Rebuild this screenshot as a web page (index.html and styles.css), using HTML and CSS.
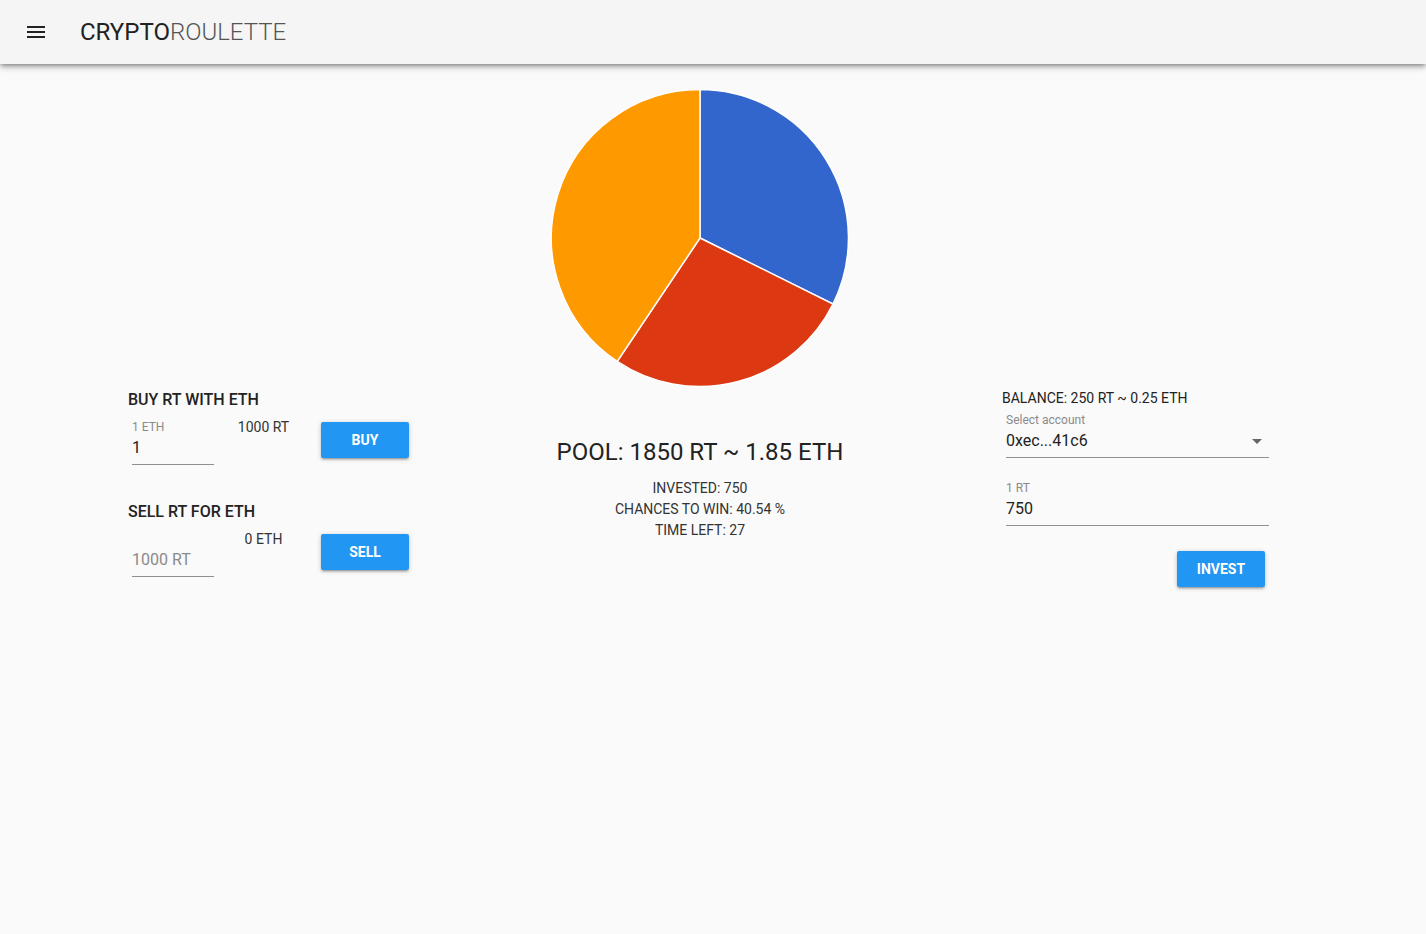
FILE: index.html
```html
<!DOCTYPE html>
<html>
<head>
<meta charset="utf-8">
<title>CryptoRoulette</title>
<link rel="stylesheet" href="styles.css">
</head>
<body>
<header class="appbar">
  <button class="menu-btn" aria-label="menu">
    <svg width="18" height="12" viewBox="0 0 18 12"><rect x="0" y="0" width="18" height="2" fill="#222"/><rect x="0" y="5" width="18" height="2" fill="#222"/><rect x="0" y="10" width="18" height="2" fill="#222"/></svg>
  </button>
  <h1 class="brand"><span class="brand-strong">CRYPTO</span><span class="brand-light">ROULETTE</span></h1>
</header>

<main class="page">
  <div class="chart">
    <svg width="300" height="300" viewBox="0 0 300 300">
      <path d="M150 150 L150 1.5 A148.5 148.5 0 0 1 283 216 Z" fill="#3366cc" stroke="#ffffff" stroke-width="1.5"/>
      <path d="M150 150 L283 216 A148.5 148.5 0 0 1 67.2 273.4 Z" fill="#dc3912" stroke="#ffffff" stroke-width="1.5"/>
      <path d="M150 150 L67.2 273.4 A148.5 148.5 0 0 1 150 1.5 Z" fill="#ff9900" stroke="#ffffff" stroke-width="1.5"/>
    </svg>
  </div>

  <div class="row">
    <section class="col-left">
      <div class="trade">
        <h2 class="trade-title">BUY RT WITH ETH</h2>
        <div class="trade-row">
          <div class="field small">
            <div class="field-label">1 ETH</div>
            <div class="field-input">1</div>
          </div>
          <div class="conv">1000 RT</div>
          <button class="btn">BUY</button>
        </div>
      </div>
      <div class="trade sell">
        <h2 class="trade-title">SELL RT FOR ETH</h2>
        <div class="trade-row">
          <div class="field small">
            <div class="field-label">&nbsp;</div>
            <div class="field-input placeholder">1000 RT</div>
          </div>
          <div class="conv">0 ETH</div>
          <button class="btn">SELL</button>
        </div>
      </div>
    </section>

    <section class="col-center">
      <div class="pool">POOL: 1850 RT ~ 1.85 ETH</div>
      <div class="stats">
        <div>INVESTED: 750</div>
        <div>CHANCES TO WIN: 40.54 %</div>
        <div>TIME LEFT: 27</div>
      </div>
    </section>

    <section class="col-right">
      <div class="balance">BALANCE: 250 RT ~ 0.25 ETH</div>
      <div class="field wide select">
        <div class="field-label">Select account</div>
        <div class="field-input select-input">0xec...41c6<span class="caret"></span></div>
      </div>
      <div class="field wide invest-field">
        <div class="field-label">1 RT</div>
        <div class="field-input">750</div>
      </div>
      <div class="invest-row">
        <button class="btn">INVEST</button>
      </div>
    </section>
  </div>
</main>
</body>
</html>
```

FILE: styles.css
```css
* { box-sizing: border-box; }

html, body {
  margin: 0;
  padding: 0;
}

body {
  background: #fafafa;
  font-family: Roboto, "Liberation Sans", Arial, sans-serif;
  color: #222;
  min-height: 934px;
}

.appbar {
  height: 64px;
  background: #f5f5f5;
  display: flex;
  align-items: center;
  box-shadow: 0 2px 4px -1px rgba(0,0,0,0.35), 0 4px 5px 0 rgba(0,0,0,0.14), 0 1px 10px 0 rgba(0,0,0,0.12);
  position: relative;
  z-index: 2;
}

.menu-btn {
  border: 0;
  background: transparent;
  padding: 0;
  margin: 0 0 0 27px;
  width: 18px;
  height: 12px;
  display: flex;
}

.brand {
  margin: 0 0 0 35px;
  font-size: 24px;
  font-weight: 400;
  letter-spacing: 0;
  line-height: 28px;
}

.brand-strong { color: #222; font-weight: 400; }
.brand-light { color: #555; font-weight: 300; }

.chart {
  display: flex;
  justify-content: center;
  padding-top: 24px;
  padding-right: 26px;
}

.chart svg { display: block; }

.row {
  display: flex;
  padding-left: 128px;
}

.col-left { width: 372px; }
.col-center { width: 400px; text-align: center; padding-top: 50px; }
.col-right { width: 373px; padding-left: 102px; }

.trade-title {
  margin: 0;
  padding-top: 1px;
  font-size: 16px;
  font-weight: 500;
  line-height: 22px;
  color: #222;
}

.trade.sell { margin-top: 35px; }

.trade-row {
  display: flex;
  align-items: flex-start;
}

.field.small {
  margin-left: 4px;
  width: 82px;
}

.field-label {
  margin-top: 9px;
  font-size: 12px;
  line-height: 14px;
  color: #8a8a8a;
}

.field-input {
  margin-top: 4px;
  height: 27px;
  font-size: 16px;
  line-height: 20px;
  color: #222;
  border-bottom: 1px solid #8f8f8f;
}

.field-input.placeholder { color: #8a8a8a; }

.conv {
  width: 99px;
  text-align: center;
  font-size: 14px;
  line-height: 16px;
  margin-top: 8px;
  color: #333;
}

.btn {
  margin-left: 8px;
  margin-top: 11px;
  width: 88px;
  height: 36px;
  border: 0;
  border-radius: 2px;
  background: #2196f3;
  color: #fff;
  font-family: Roboto, "Liberation Sans", Arial, sans-serif;
  font-size: 14px;
  font-weight: 700;
  letter-spacing: 0;
  box-shadow: 0 1px 5px rgba(0,0,0,0.2), 0 2px 2px rgba(0,0,0,0.14), 0 3px 1px -2px rgba(0,0,0,0.12);
  padding: 0;
}

.pool {
  font-size: 24px;
  line-height: 28px;
  color: #222;
}

.stats {
  margin-top: 12px;
  font-size: 14px;
  line-height: 21px;
  color: #333;
}

.balance {
  font-size: 14px;
  line-height: 20px;
  color: #222;
}

.field.wide {
  margin-left: 4px;
  width: 263px;
}

.select .field-label { margin-top: 5px; }
.select .field-input { margin-top: 3px; height: 28px; padding-top: 1px; position: relative; }

.caret {
  position: absolute;
  right: 7px;
  top: 9px;
  width: 0;
  height: 0;
  border-left: 5px solid transparent;
  border-right: 5px solid transparent;
  border-top: 5px solid #666;
}

.invest-field .field-label { margin-top: 23px; }
.invest-field .field-input { margin-top: 4px; height: 27px; }

.invest-row {
  width: 267px;
  display: flex;
  justify-content: flex-end;
}

.invest-row .btn {
  margin-top: 25px;
  margin-right: 4px;
}
```
